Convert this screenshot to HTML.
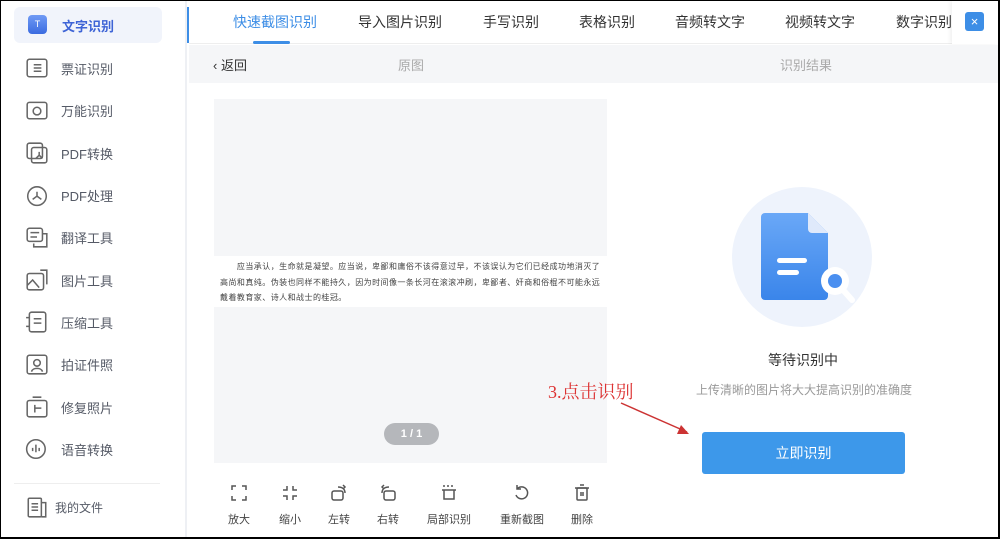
<!DOCTYPE html>
<html><head><meta charset="utf-8"><style>
*{margin:0;padding:0;box-sizing:border-box}
body{width:1000px;height:539px;overflow:hidden;background:#000;font-family:"Liberation Sans","Noto Sans CJK SC",sans-serif;position:relative}
.frame{position:absolute;left:1px;top:1px;width:997px;height:536px;background:#fff;overflow:hidden}
.side{position:absolute;left:0;top:0;width:186px;height:536px;background:#fff;border-right:2px solid #eef0f4}
.item{position:absolute;left:24px;height:24px;display:flex;align-items:center;font-size:13px;color:#555a66}
.item svg{width:24px;height:24px;margin-right:12px}
.active{position:absolute;left:13px;top:6px;width:148px;height:36px;background:#f1f4fb;border-radius:6px}
.main{position:absolute;left:188px;top:0;right:0;bottom:0}
.tabs{height:43px;position:relative;border-bottom:1px solid #eee}
.tab{position:absolute;top:11px;font-size:14px;color:#333}
.sub{position:absolute;top:44px;left:0;right:0;height:38px;background:#f5f6f8;font-size:13px;color:#aaa}
.tb{position:absolute;top:510px;font-size:11px;color:#444;text-align:center;width:40px}
.tbi{position:absolute;top:482px}
.para{position:absolute;left:0;top:157px;width:393px;height:51px;background:#fff;font-size:8px;line-height:15.5px;color:#444;padding:3px 0 0 6px;white-space:nowrap;letter-spacing:0.45px}
</style></head><body><div class="frame">
<div class="side">
<div class="active"></div>
<div style="position:absolute;left:27px;top:14px;width:19px;height:19px;border-radius:4px;background:linear-gradient(#6f9af5,#3b6be0);color:#fff;font-size:9px;text-align:center;line-height:19px">T</div>
<div style="position:absolute;left:61px;top:15px;font-size:13px;color:#3e64d6;font-weight:bold">文字识别</div>
<div class="item" style="top:55px"><svg viewBox="0 0 22 22" fill="none" stroke="#666" stroke-width="1.4"><rect x="2" y="3" width="18" height="16" rx="2"/><path d="M8 8h7M8 11h7M8 14h7"/></svg>票证识别</div>
<div class="item" style="top:97px"><svg viewBox="0 0 22 22" fill="none" stroke="#666" stroke-width="1.4"><rect x="2" y="4" width="18" height="15" rx="2"/><circle cx="11" cy="12" r="3.5"/></svg>万能识别</div>
<div class="item" style="top:140px"><svg viewBox="0 0 22 22" fill="none" stroke="#666" stroke-width="1.4"><rect x="2" y="2" width="14" height="14" rx="2"/><rect x="6" y="6" width="14" height="14" rx="2"/><path d="M13 10v3l-3 3M13 13l3 3"/></svg>PDF转换</div>
<div class="item" style="top:182px"><svg viewBox="0 0 22 22" fill="none" stroke="#666" stroke-width="1.4"><circle cx="11" cy="12" r="8.5"/><path d="M11 8v4l-4 3M11 12l4 3"/></svg>PDF处理</div>
<div class="item" style="top:224px"><svg viewBox="0 0 22 22" fill="none" stroke="#666" stroke-width="1.4"><rect x="2" y="3" width="14" height="12" rx="2"/><path d="M5 7h8M5 11h6M16 8h4v12h-12v-3"/></svg>翻译工具</div>
<div class="item" style="top:267px"><svg viewBox="0 0 22 22" fill="none" stroke="#666" stroke-width="1.4"><rect x="2" y="5" width="15" height="15" rx="2"/><path d="M2 16l5-5 6 7M14 2h6v13"/></svg>图片工具</div>
<div class="item" style="top:309px"><svg viewBox="0 0 22 22" fill="none" stroke="#666" stroke-width="1.4"><rect x="4" y="2" width="15" height="18" rx="2"/><path d="M8 8h7M8 12h7M1 7h3M1 15h3"/></svg>压缩工具</div>
<div class="item" style="top:351px"><svg viewBox="0 0 22 22" fill="none" stroke="#666" stroke-width="1.4"><rect x="2" y="3" width="18" height="17" rx="2"/><circle cx="11" cy="10" r="3"/><path d="M6 18c1-4 9-4 10 0"/></svg>拍证件照</div>
<div class="item" style="top:394px"><svg viewBox="0 0 22 22" fill="none" stroke="#666" stroke-width="1.4"><rect x="2" y="5" width="18" height="15" rx="2"/><path d="M9 9v7M9 12h6M7 2h8"/></svg>修复照片</div>
<div class="item" style="top:436px"><svg viewBox="0 0 22 22" fill="none" stroke="#666" stroke-width="1.4"><circle cx="10" cy="11" r="8.5"/><path d="M7 10v3M10 7v7M13 10v3"/></svg>语音转换</div>
<div style="position:absolute;left:13px;top:482px;width:146px;border-top:1px solid #eee"></div>
<div class="item" style="top:494px;font-size:12px"><svg viewBox="0 0 22 22" fill="none" stroke="#666" stroke-width="1.4" style="margin-right:6px"><rect x="3" y="3" width="12" height="17" rx="1"/><path d="M6 8h6M6 11h6M6 14h6M15 7h4v13h-4"/></svg>我的文件</div>
</div>
<div style="position:absolute;left:186px;top:6px;width:2px;height:36px;background:#3d8ee6"></div>
<div class="main">
<div class="tabs">
<div class="tab" style="left:44px;color:#3d8ee6">快速截图识别</div>
<div style="position:absolute;left:64px;top:40px;width:37px;height:3px;background:#3d8ee6;border-radius:2px"></div>
<div class="tab" style="left:169px">导入图片识别</div>
<div class="tab" style="left:294px">手写识别</div>
<div class="tab" style="left:390px">表格识别</div>
<div class="tab" style="left:486px">音频转文字</div>
<div class="tab" style="left:596px">视频转文字</div>
<div class="tab" style="left:707px;width:56px;overflow:hidden;white-space:nowrap">数字识别</div>
<div style="position:absolute;left:763px;top:0;width:46px;height:43px;background:#fff;box-shadow:-2px 0 4px rgba(0,0,0,.06)"></div>
<div style="position:absolute;left:776px;top:11px;width:19px;height:19px;background:#3d8ee6;border-radius:3px;color:#fff;font-size:13px;line-height:19px;text-align:center">×</div>
</div>
<div class="sub"><span style="position:absolute;left:24px;top:10px;color:#333">‹ 返回</span><span style="position:absolute;left:209px;top:10px">原图</span><span style="position:absolute;left:591px;top:10px">识别结果</span></div>
<div style="position:absolute;left:25px;top:98px;width:393px;height:364px;background:#f5f6f8">
<div class="para">　　应当承认，生命就是凝望。应当说，卑鄙和庸俗不该得意过早，不该误认为它们已经成功地消灭了<br>高尚和真纯。伪装也同样不能持久，因为时间像一条长河在滚滚冲刷，卑鄙者、奸商和俗棍不可能永远<br>戴着教育家、诗人和战士的桂冠。</div>
<div style="position:absolute;left:170px;top:324px;width:55px;height:22px;border-radius:11px;background:#b5b7bb;color:#fff;font-size:11px;text-align:center;line-height:22px;font-weight:bold">1 / 1</div>
</div>
<svg class="tbi" style="left:40px" width="20" height="20" viewBox="0 0 20 20" fill="none" stroke="#555" stroke-width="1.5"><path d="M3 7V3h4M17 7V3h-4M3 13v4h4M17 13v4h-4"/></svg>
<svg class="tbi" style="left:91px" width="20" height="20" viewBox="0 0 20 20" fill="none" stroke="#555" stroke-width="1.5"><path d="M7 3v4H3M13 3v4h4M7 17v-4H3M13 17v-4h4"/></svg>
<svg class="tbi" style="left:140px" width="20" height="20" viewBox="0 0 20 20" fill="none" stroke="#555" stroke-width="1.5"><rect x="3" y="8" width="11" height="9" rx="2"/><path d="M9 4c4 0 7 2 7 6M14 2l2 2-2 2"/></svg>
<svg class="tbi" style="left:189px" width="20" height="20" viewBox="0 0 20 20" fill="none" stroke="#555" stroke-width="1.5"><rect x="6" y="8" width="11" height="9" rx="2"/><path d="M11 4c-4 0-7 2-7 6M6 2l-2 2 2 2"/></svg>
<svg class="tbi" style="left:250px" width="20" height="20" viewBox="0 0 20 20" fill="none" stroke="#555" stroke-width="1.5"><path d="M4 3h12" stroke-dasharray="2 2"/><path d="M3 7h14M5 7v9h10V7"/></svg>
<svg class="tbi" style="left:323px" width="20" height="20" viewBox="0 0 20 20" fill="none" stroke="#555" stroke-width="1.5"><path d="M5 6a6 6 0 1 1-1 6M5 2v4h4"/></svg>
<svg class="tbi" style="left:383px" width="20" height="20" viewBox="0 0 20 20" fill="none" stroke="#555" stroke-width="1.5"><rect x="5" y="5" width="10" height="12" rx="1"/><path d="M3 5h14M8 2h4M9 9v4M11 9v4"/></svg>
<div class="tb" style="left:30px">放大</div>
<div class="tb" style="left:81px">缩小</div>
<div class="tb" style="left:130px">左转</div>
<div class="tb" style="left:179px">右转</div>
<div class="tb" style="left:235px;width:50px">局部识别</div>
<div class="tb" style="left:307px;width:52px">重新截图</div>
<div class="tb" style="left:373px">删除</div>
<div style="position:absolute;left:543px;top:186px;width:140px;height:140px;border-radius:50%;background:#eef3fc"></div>
<svg style="position:absolute;left:565px;top:208px" width="120" height="100" viewBox="0 0 120 100">
<defs><linearGradient id="g" x1="0" y1="0" x2="0" y2="1"><stop offset="0" stop-color="#6aa8f7"/><stop offset="1" stop-color="#3a85ea"/></linearGradient></defs>
<path d="M11 4h43l20 20v63a4 4 0 0 1-4 4H11a4 4 0 0 1-4-4V8a4 4 0 0 1 4-4z" fill="url(#g)"/>
<path d="M54 4v16a4 4 0 0 0 4 4h16z" fill="#dfe9fb"/>
<rect x="23" y="49" width="30" height="5" rx="2.5" fill="#fff"/><rect x="23" y="61" width="22" height="5" rx="2.5" fill="#fff"/>
<circle cx="81" cy="72" r="14" fill="#fff"/><circle cx="81" cy="72" r="7" fill="#4a8ff0"/>
<path d="M90 82l8 9" stroke="#fff" stroke-width="6" stroke-linecap="round"/>
</svg>
<div style="position:absolute;left:549px;top:349px;width:130px;text-align:center;font-size:14px;color:#333">等待识别中</div>
<div style="position:absolute;left:480px;top:380px;width:270px;text-align:center;font-size:12px;color:#999">上传清晰的图片将大大提高识别的准确度</div>
<div style="position:absolute;left:513px;top:431px;width:203px;height:42px;background:#3d98ea;border-radius:3px;color:#fff;font-size:14px;text-align:center;line-height:42px">立即识别</div>
<div style="position:absolute;left:359px;top:377px;font-family:'Liberation Serif','Noto Serif CJK SC',serif;font-size:18px;color:#d33">3.点击识别</div>
<svg style="position:absolute;left:430px;top:400px" width="80" height="40"><path d="M2 2L68 31" stroke="#c33" stroke-width="1.5"/><path d="M58 33l12 0-8-9z" fill="#c33"/></svg>
</div>
</div></body></html>
